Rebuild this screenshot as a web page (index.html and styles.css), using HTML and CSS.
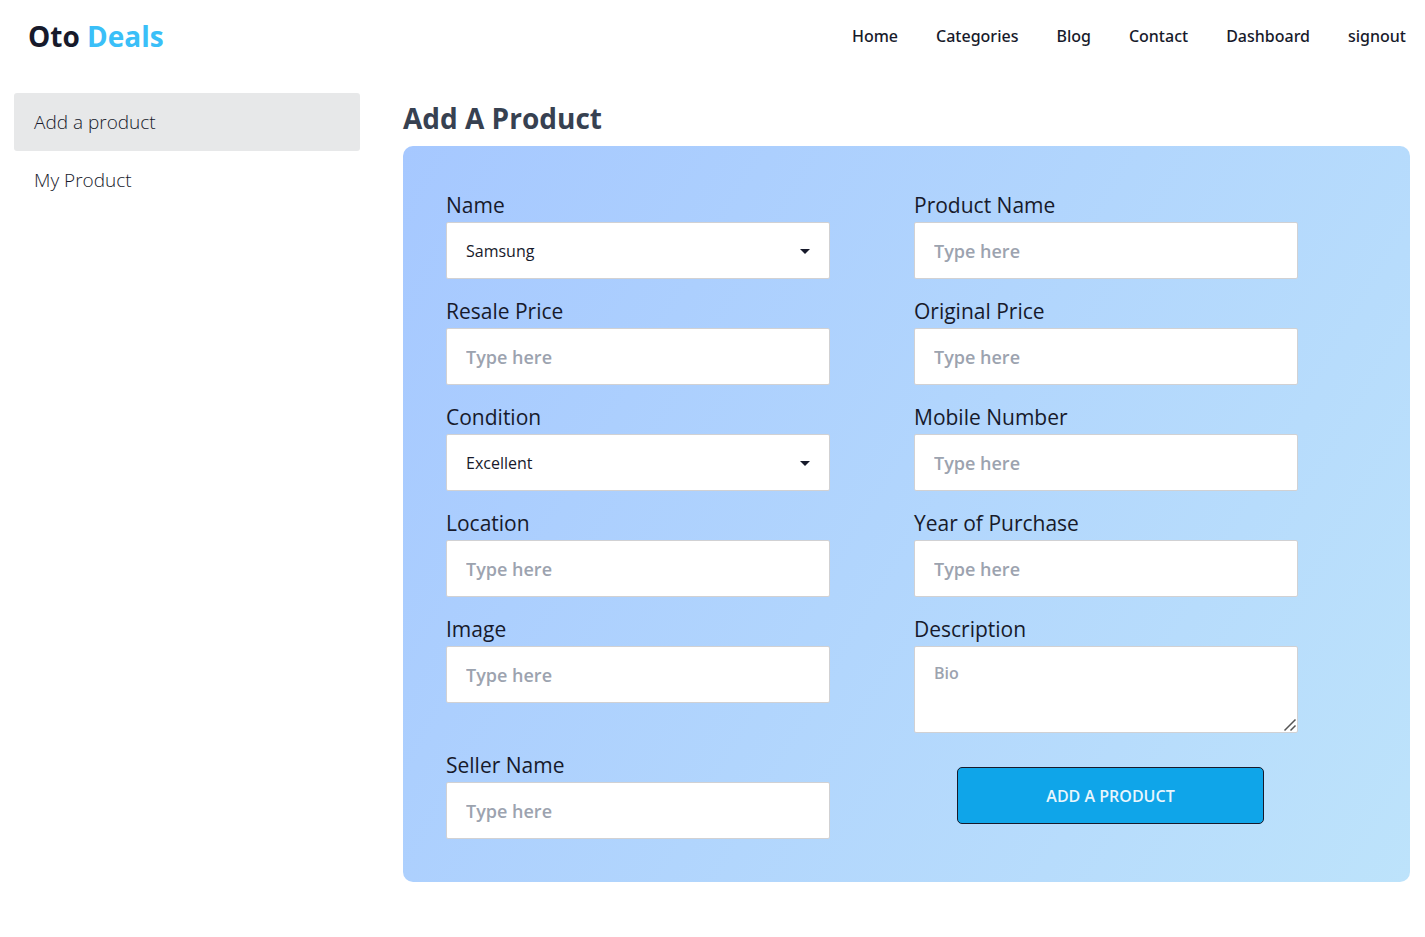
FILE: index.html
```html
<!DOCTYPE html>
<html lang="en">
<head>
  <meta charset="utf-8">
  <meta name="viewport" content="width=device-width, initial-scale=1">
  <title>Oto Deals</title>
  <link rel="stylesheet" href="styles.css">
</head>
<body>
  <header class="navbar">
    <a class="brand" href="#">Oto <span class="brand-accent">Deals</span></a>
    <nav class="nav-links">
      <a href="#">Home</a>
      <a href="#">Categories</a>
      <a href="#">Blog</a>
      <a href="#">Contact</a>
      <a href="#">Dashboard</a>
      <a href="#">signout</a>
    </nav>
  </header>
  <div class="layout">
    <aside class="sidebar">
      <a class="side-link active" href="#">Add a product</a>
      <a class="side-link" href="#">My Product</a>
    </aside>
    <main class="content">
      <h1 class="title">Add A Product</h1>
      <form class="panel">
        <div class="field">
          <label for="brand">Name</label>
          <div class="select-wrap">
            <select id="brand" class="control"><option>Samsung</option></select>
            <svg class="caret" viewBox="0 0 10 5" aria-hidden="true"><path d="M0 0h10L5 5z"/></svg>
          </div>
        </div>
        <div class="field">
          <label for="product">Product Name</label>
          <input id="product" class="control" type="text" placeholder="Type here">
        </div>
        <div class="field">
          <label for="resale">Resale Price</label>
          <input id="resale" class="control" type="text" placeholder="Type here">
        </div>
        <div class="field">
          <label for="original">Original Price</label>
          <input id="original" class="control" type="text" placeholder="Type here">
        </div>
        <div class="field">
          <label for="condition">Condition</label>
          <div class="select-wrap">
            <select id="condition" class="control"><option>Excellent</option></select>
            <svg class="caret" viewBox="0 0 10 5" aria-hidden="true"><path d="M0 0h10L5 5z"/></svg>
          </div>
        </div>
        <div class="field">
          <label for="mobile">Mobile Number</label>
          <input id="mobile" class="control" type="text" placeholder="Type here">
        </div>
        <div class="field">
          <label for="location">Location</label>
          <input id="location" class="control" type="text" placeholder="Type here">
        </div>
        <div class="field">
          <label for="year">Year of Purchase</label>
          <input id="year" class="control" type="text" placeholder="Type here">
        </div>
        <div class="field">
          <label for="image">Image</label>
          <input id="image" class="control" type="text" placeholder="Type here">
        </div>
        <div class="field">
          <label for="description">Description</label>
          <textarea id="description" class="control bio" placeholder="Bio"></textarea>
        </div>
        <div class="field">
          <label for="seller">Seller Name</label>
          <input id="seller" class="control" type="text" placeholder="Type here">
        </div>
        <div class="action">
          <button class="submit" type="submit">ADD A PRODUCT</button>
        </div>
      </form>
    </main>
  </div>
</body>
</html>
```
FILE: styles.css
```css
* { box-sizing: border-box; }

body {
  margin: 0;
  background: #fff;
  color: #171a2b;
  font-family: "Open Sans", "Noto Sans", sans-serif;
  font-size: 16px;
}

a { color: inherit; text-decoration: none; }

.navbar {
  display: flex;
  align-items: center;
  justify-content: space-between;
  min-height: 72px;
  padding: 0 19px 0 28px;
}

.brand { font-size: 28px; font-weight: 700; }
.brand-accent { color: #3abff8; }

.nav-links {
  display: flex;
  gap: 38px;
  font-family: "Noto Sans", sans-serif;
  font-weight: 500;
}

.layout {
  display: grid;
  grid-template-columns: 346px 1fr;
  gap: 43px;
  padding: 21px 15px 55px 14px;
}

.side-link {
  display: flex;
  align-items: center;
  height: 58px;
  padding: 0 20px;
  border-radius: 3px;
  font-size: 19px;
  font-weight: 300;
}
.side-link.active { background: #e7e8e9; }

.title {
  margin: 0;
  padding: 5px 0 8px;
  color: #374151;
  font-size: 28px;
  font-weight: 700;
  line-height: 40px;
}

.panel {
  display: grid;
  grid-template-columns: 1fr 1fr;
  row-gap: 16px;
  padding: 43px 28px 43px 43px;
  border-radius: 10px;
  background: linear-gradient(120deg, #a6c8ff, #bde3fb);
}

.field { width: 82%; }

.field label {
  display: block;
  font-size: 21px;
  font-weight: 500;
  line-height: 33px;
}

.control {
  display: block;
  width: 100%;
  height: 57px;
  margin: 0;
  padding: 0 19px;
  border: 1px solid #d1d1d3;
  border-radius: 2px;
  outline: none;
  background: #fff;
  color: inherit;
  font-family: inherit;
  font-size: 18px;
  font-weight: 500;
}
.control::placeholder { color: #9ca3af; font-weight: 600; opacity: 1; }

.select-wrap { position: relative; }
.select-wrap .control { appearance: none; font-size: 16px; }
.caret {
  position: absolute;
  top: 27px;
  right: 20px;
  width: 10px;
  height: 5px;
  fill: #171a2b;
  pointer-events: none;
}

.control.bio {
  height: 87px;
  padding: 14px 19px;
  font-size: 16px;
  line-height: 24px;
  resize: vertical;
}
.bio::-webkit-resizer {
  background: url("data:image/svg+xml,%3Csvg xmlns='http://www.w3.org/2000/svg' width='15' height='15'%3E%3Cpath d='M2.5 13.5l11-11M8.500 13.500l5-5' stroke='%23555' stroke-width='1.5'/%3E%3C/svg%3E") no-repeat;
}

.action { width: 82%; padding: 18px 0 0 43px; }

.submit {
  width: 307px;
  max-width: 100%;
  height: 57px;
  border: 1px solid #171a2b;
  border-radius: 5px;
  background: #0fa5e9;
  color: #e8f6fd;
  font-family: inherit;
  font-size: 16px;
  font-weight: 600;
}
```
